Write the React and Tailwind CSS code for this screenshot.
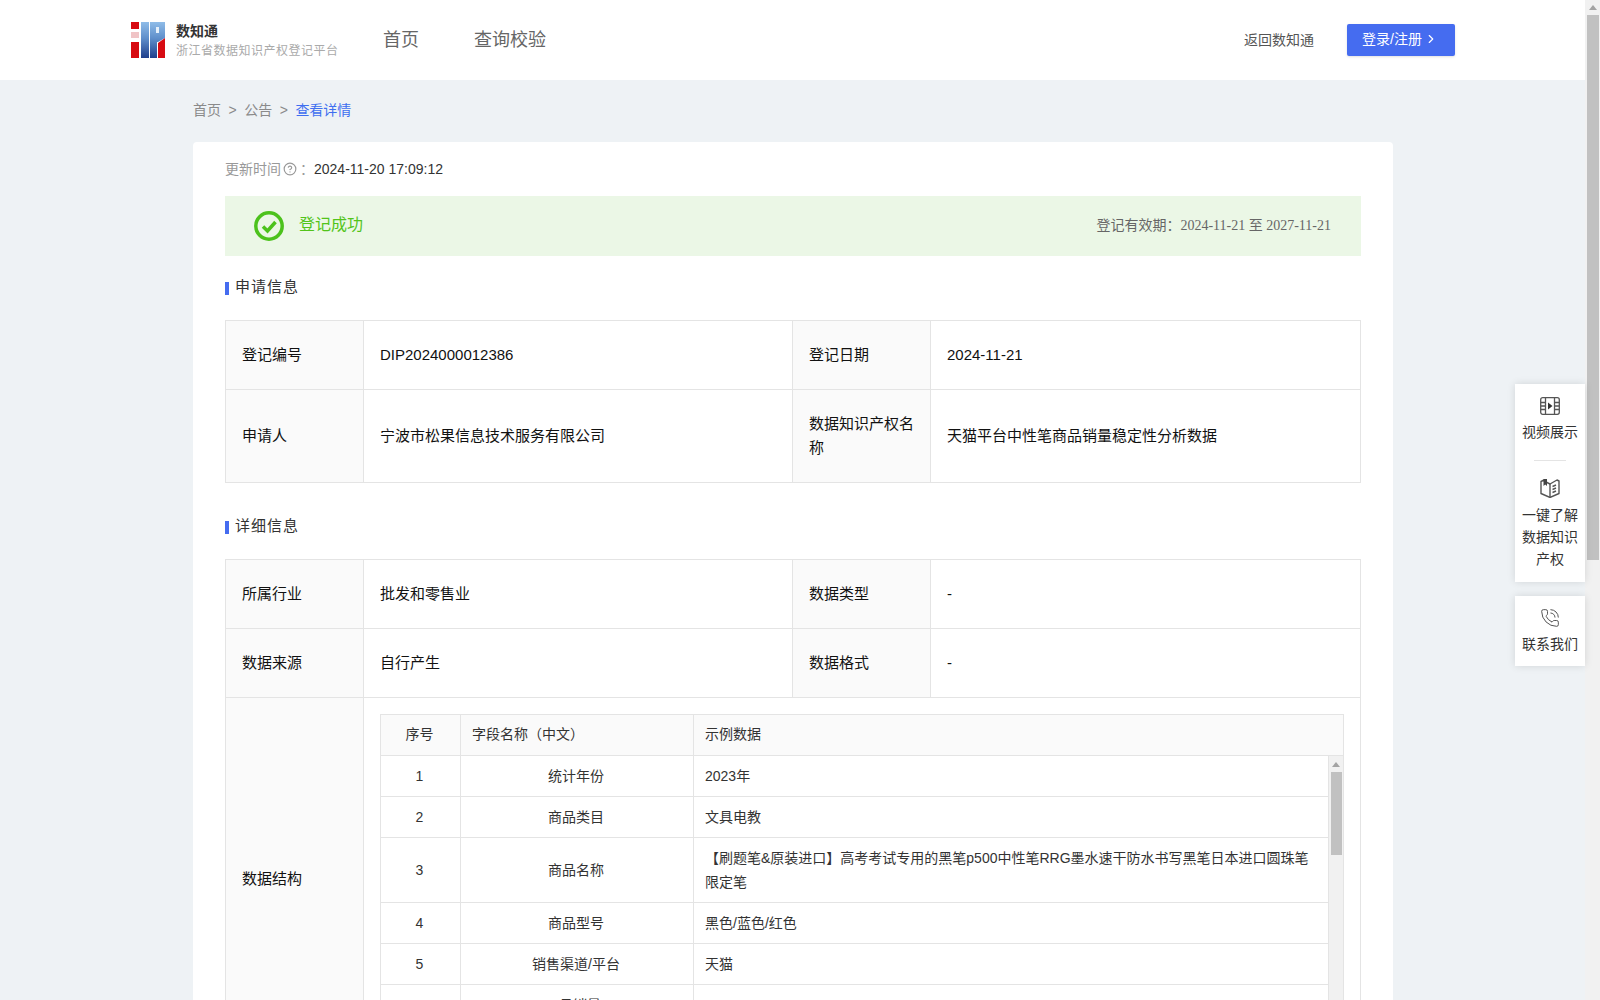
import { ChevronRight, CircleHelp, PhoneCall } from "lucide-react";

const applyRows = [
  ["登记编号", "DIP2024000012386", "登记日期", "2024-11-21"],
  ["申请人", "宁波市松果信息技术服务有限公司", "数据知识产权名称", "天猫平台中性笔商品销量稳定性分析数据"],
];

const detailRows = [
  ["所属行业", "批发和零售业", "数据类型", "-"],
  ["数据来源", "自行产生", "数据格式", "-"],
];

const fieldRows = [
  ["1", "统计年份", "2023年"],
  ["2", "商品类目", "文具电教"],
  ["3", "商品名称", "【刷题笔&原装进口】高考考试专用的黑笔p500中性笔RRG墨水速干防水书写黑笔日本进口圆珠笔限定笔"],
  ["4", "商品型号", "黑色/蓝色/红色"],
  ["5", "销售渠道/平台", "天猫"],
  ["6", "1月销量", "2350"],
  ["7", "2月销量", "2180"],
];

const labelCell = "border border-[#e4e4e4] bg-[#fafafa] px-4 py-[22px] text-[15px] leading-6 text-[#111] align-middle";
const valueCell = "border border-[#e4e4e4] px-4 py-[22px] text-[15px] leading-6 text-[#111] align-middle";
const innerHead = "border border-[#e4e4e4] pl-[11px] pr-[13px] pt-[7px] pb-[9px] leading-6 align-middle font-normal";
const innerCell = "border border-[#e4e4e4] border-t-0 pl-[11px] pr-[13px] py-2 leading-6 align-middle";

function Logo() {
  return (
    <svg width="34" height="36" viewBox="0 0 34 36" className="shrink-0">
      <defs>
        <linearGradient id="logoBlue" x1="0" y1="0" x2="0" y2="1">
          <stop offset="0" stopColor="#8fbce8" />
          <stop offset="0.45" stopColor="#5f8fcb" />
          <stop offset="1" stopColor="#1f3f8c" />
        </linearGradient>
      </defs>
      <rect x="0" y="0" width="8" height="7" fill="#d70b12" />
      <rect x="0" y="10" width="8" height="6" fill="#f0c4c6" />
      <rect x="0" y="20" width="8" height="16" fill="#d70b12" />
      <rect x="10" y="0" width="8" height="36" fill="url(#logoBlue)" />
      <path d="M19 0H34V16L27 20H26V36H19Z" fill="url(#logoBlue)" />
      <rect x="25" y="5" width="3" height="6" fill="#e6f0fa" />
      <path d="M27 21L34 16V36H27Z" fill="#d70b12" />
    </svg>
  );
}

function FilmIcon() {
  return (
    <svg width="20" height="18" viewBox="0 0 20 18" fill="none" stroke="#555" strokeWidth="1.3">
      <rect x="0.7" y="0.7" width="18.6" height="16.6" rx="2" />
      <path d="M5.5 1V17M14.5 1V17M1 5.5H5.5M1 9H5.5M1 12.5H5.5M14.5 5.5H19M14.5 9H19M14.5 12.5H19" />
      <path d="M8 5.5L12.5 9L8 12.5Z" fill="#333" stroke="none" />
    </svg>
  );
}

function BookIcon() {
  return (
    <svg width="20" height="20" viewBox="0 0 20 20" fill="none" stroke="#555" strokeWidth="1.4">
      <path d="M1 3.5L4 2V3L10 6L17 2L19 3V15.5L10 19.5L1 15.5Z" strokeLinejoin="round" />
      <path d="M10 6V19" />
      <path d="M3.5 1H7V8L5.2 6.5L3.5 8Z" fill="#444" stroke="none" />
      <path d="M12.5 8.5L16 7M12.5 11.5L16 10M12.5 14.5L16 13" />
    </svg>
  );
}

function SectionTitle({ children, className }) {
  return (
    <div className={`flex items-center gap-[6px] h-[22px] ${className}`}>
      <span className="w-1 h-[13px] mt-[2px] bg-[#456cf0]" />
      <span className="text-[15px] tracking-[1px] text-[#333]">{children}</span>
    </div>
  );
}

function InfoRows({ rows }) {
  return rows.map((row) => (
    <tr key={row[0]}>
      <td className={labelCell}>{row[0]}</td>
      <td className={valueCell}>{row[1]}</td>
      <td className={labelCell}>{row[2]}</td>
      <td className={valueCell}>{row[3]}</td>
    </tr>
  ));
}

function InfoCols() {
  return (
    <colgroup>
      <col className="w-[138px]" />
      <col className="w-[429px]" />
      <col className="w-[138px]" />
      <col />
    </colgroup>
  );
}

function FieldTable() {
  return (
    <div className="w-full text-sm text-[#333]">
      <table className="w-full table-fixed border-collapse">
        <colgroup>
          <col className="w-[80px]" />
          <col className="w-[233px]" />
          <col />
        </colgroup>
        <thead>
          <tr className="bg-[#fafafa]">
            <th className={`${innerHead} text-center`}>序号</th>
            <th className={`${innerHead} text-left`}>字段名称（中文）</th>
            <th className={`${innerHead} text-left`}>示例数据</th>
          </tr>
        </thead>
      </table>
      <div className="flex h-[288px] overflow-hidden">
        <table className="w-[949px] h-fit table-fixed border-collapse shrink-0">
          <colgroup>
            <col className="w-[80px]" />
            <col className="w-[233px]" />
            <col />
          </colgroup>
          <tbody>
            {fieldRows.map((row) => (
              <tr key={row[0]}>
                <td className={`${innerCell} text-center`}>{row[0]}</td>
                <td className={`${innerCell} text-center`}>{row[1]}</td>
                <td className={innerCell}>{row[2]}</td>
              </tr>
            ))}
          </tbody>
        </table>
        <div className="flex-1 bg-[#f1f1f1] border-r border-[#e4e4e4] flex flex-col items-center">
          <div className="h-4 flex items-center justify-center">
            <span className="border-x-[4px] border-x-transparent border-b-[5px] border-b-[#a3a3a3]" />
          </div>
          <div className="w-[11px] h-[83px] bg-[#c1c1c1]" />
        </div>
      </div>
    </div>
  );
}

export default function App() {
  return (
    <div className="relative flex w-[1600px] h-[1000px] overflow-hidden bg-[#eef2f5] text-sm font-['Liberation_Sans','Noto_Sans_CJK_SC',sans-serif]">
      <div className="flex-1 min-w-0 overflow-hidden">
        <header className="h-20 bg-white flex items-center pl-[131px] pr-[130px]">
          <Logo />
          <div className="ml-[11px] w-[196px]">
            <div className="text-sm font-bold leading-[20px] text-[#333]">数知通</div>
            <div className="text-xs tracking-[0.5px] leading-[18px] pt-px text-[#aaa]">浙江省数据知识产权登记平台</div>
          </div>
          <nav className="ml-[11px] flex gap-[55px] text-lg text-[#666]">
            <a>首页</a>
            <a>查询校验</a>
          </nav>
          <a className="ml-auto text-[#555]">返回数知通</a>
          <button className="ml-[33px] w-[108px] h-8 pb-[2px] pr-[2px] rounded-[2px] bg-[#456cf0] text-white flex items-center justify-center gap-[2px] shadow-sm">
            登录/注册
            <ChevronRight size={14} />
          </button>
        </header>

        <main className="w-[1200px] ml-[193px]">
          <div className="h-[60px] mb-[2px] flex items-center gap-[7.5px] text-[#8a8a8a]">
            <span>首页</span>
            <span>&gt;</span>
            <span>公告</span>
            <span>&gt;</span>
            <span className="text-[#3f6ff0]">查看详情</span>
          </div>

          <section className="bg-white rounded-t px-8 pt-4 pb-10">
            <div className="flex items-center h-[22px]">
              <span className="text-[#999]">更新时间</span>
              <CircleHelp size={14} className="text-[#999] ml-[2px]" />
              <span className="ml-[3px] text-[#999]">：</span>
              <span className="text-[#333]">2024-11-20 17:09:12</span>
            </div>

            <div className="mt-4 h-[60px] bg-[#ebf7e6] flex items-center pl-[29px] pr-[30px]">
              <svg width="30" height="30" viewBox="0 0 30 30" fill="none">
                <circle cx="15" cy="15" r="13.2" stroke="#4cc21c" strokeWidth="3.5" />
                <path d="M9 15.5L13.5 20L21.5 11" stroke="#4cc21c" strokeWidth="3.5" />
              </svg>
              <span className="ml-[15px] mb-[2px] text-base text-[#52c41a]">登记成功</span>
              <span className="ml-auto mb-[2px] text-[#666]">
                登记有效期：
                <span className="font-['Liberation_Serif','Noto_Sans_CJK_SC',serif]">2024-11-21 至 2027-11-21</span>
              </span>
            </div>

            <SectionTitle className="mt-5 mb-[22px]">申请信息</SectionTitle>
            <table className="w-full table-fixed border-collapse">
              <InfoCols />
              <tbody>
                <InfoRows rows={applyRows} />
              </tbody>
            </table>

            <SectionTitle className="mt-8 mb-[22px]">详细信息</SectionTitle>
            <table className="w-full table-fixed border-collapse">
              <InfoCols />
              <tbody>
                <InfoRows rows={detailRows} />
                <tr>
                  <td className={labelCell}>数据结构</td>
                  <td colSpan={3} className="border border-[#e4e4e4] p-4">
                    <FieldTable />
                  </td>
                </tr>
              </tbody>
            </table>
          </section>
        </main>
      </div>

      {/* page scrollbar */}
      <div className="w-[15px] bg-[#f1f1f1] flex flex-col items-center">
        <div className="h-[15px] flex items-center justify-center">
          <span className="border-x-[4px] border-x-transparent border-b-[5px] border-b-[#a3a3a3]" />
        </div>
        <div className="w-[12px] h-[545px] bg-[#c1c1c1]" />
      </div>

      {/* floating side tools */}
      <div className="absolute right-[15px] top-[384px] w-[70px] flex flex-col gap-[14px] text-[#333] text-center leading-[22px]">
        <div className="bg-white shadow-[0_0_8px_rgba(0,0,0,0.12)] pt-[13px] pb-[10px] flex flex-col items-center h-[198px]">
          <FilmIcon />
          <div className="mt-[6px]">视频展示</div>
          <div className="w-8 h-px bg-[#e4e4e4] mt-[17px] mb-[17px]" />
          <BookIcon />
          <div className="mt-[6px] w-[56px]">一键了解数据知识产权</div>
        </div>
        <div className="bg-white shadow-[0_0_8px_rgba(0,0,0,0.12)] pt-3 flex flex-col items-center h-[70px]">
          <PhoneCall size={20} strokeWidth={1.2} className="text-[#555]" />
          <div className="mt-[5px]">联系我们</div>
        </div>
      </div>
    </div>
  );
}
